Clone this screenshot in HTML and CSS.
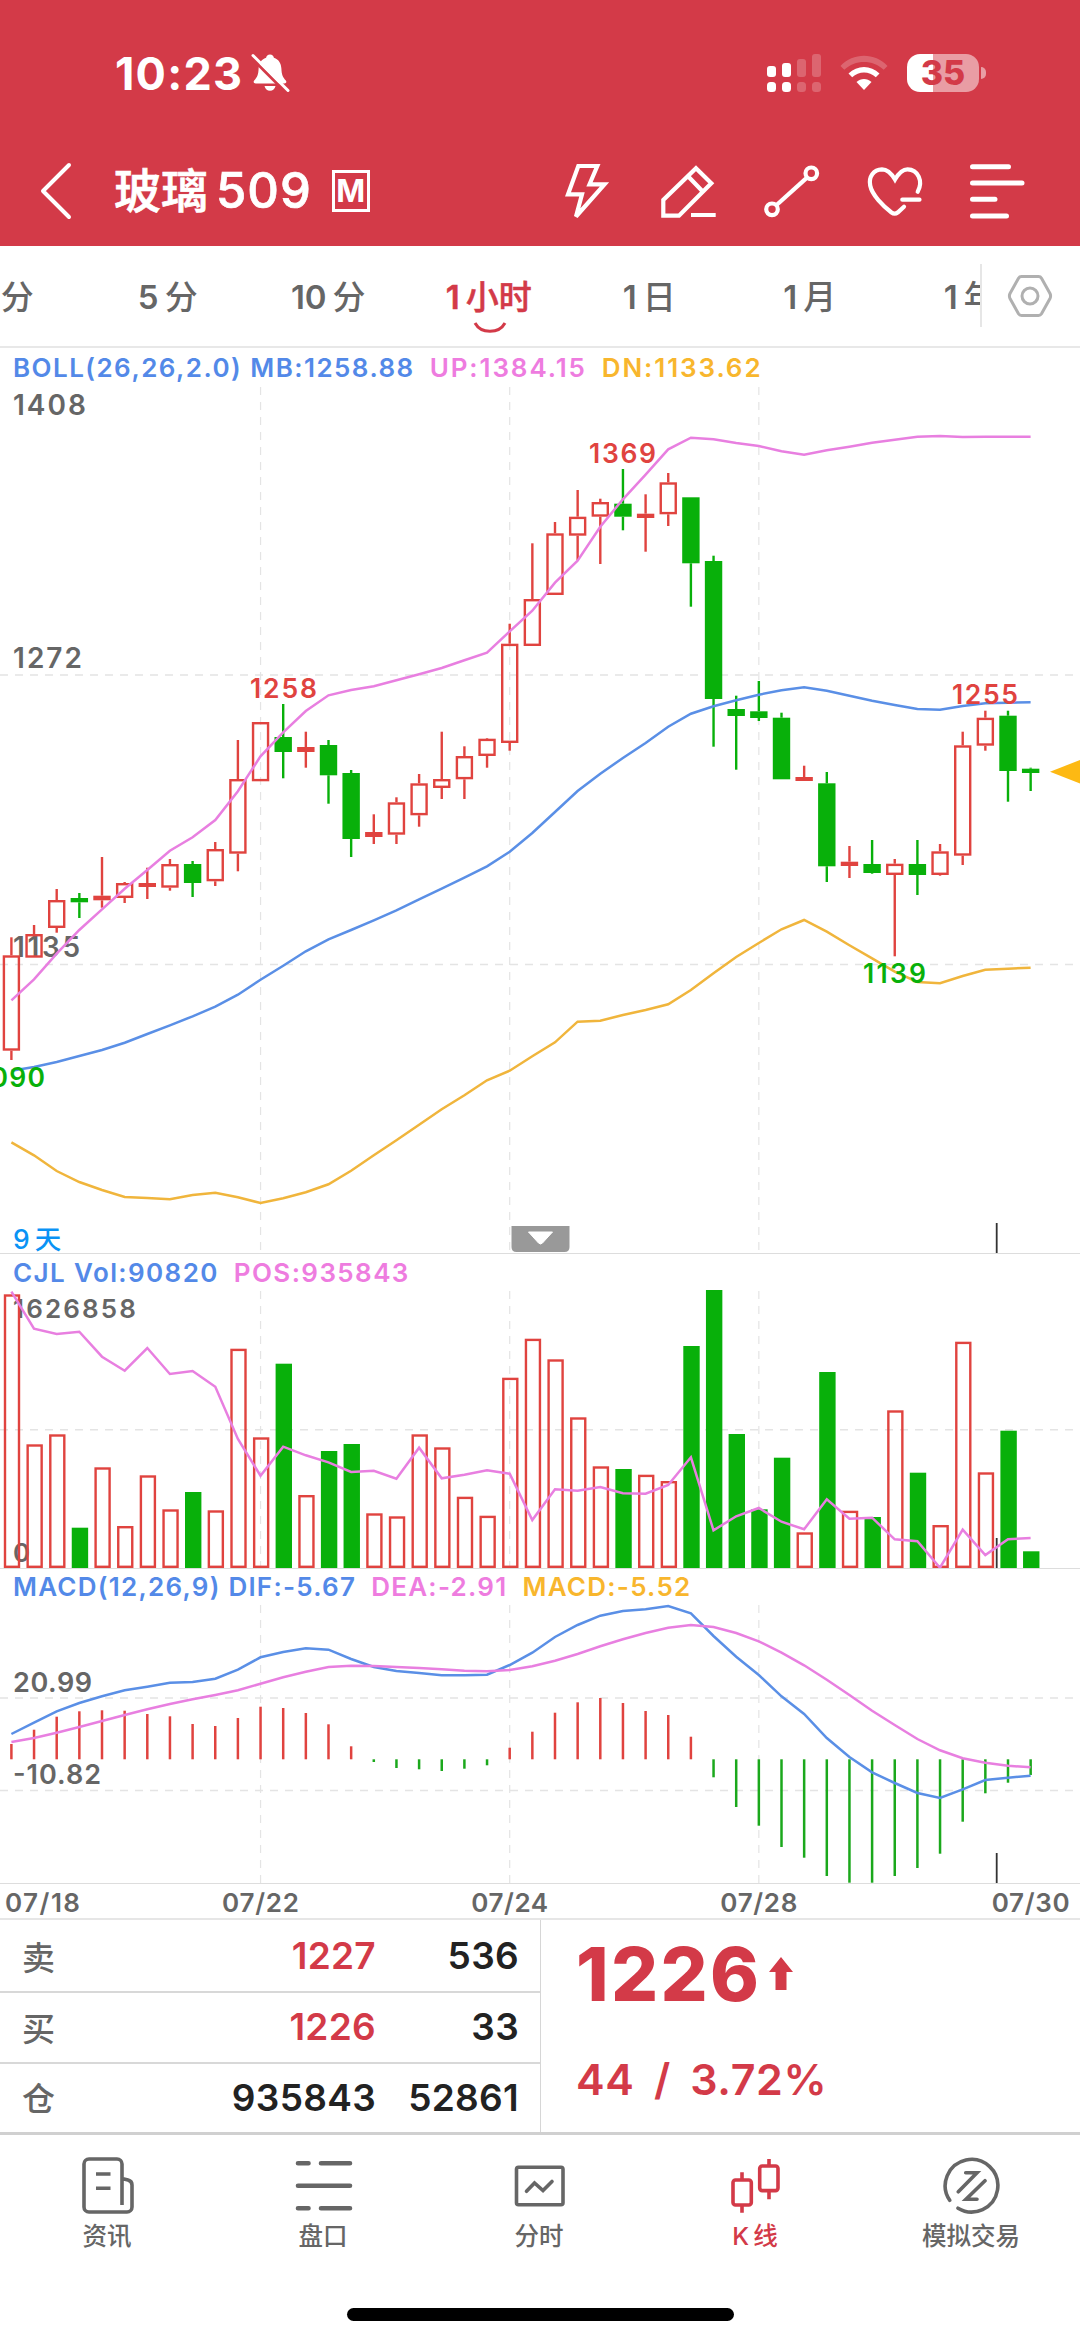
FILE: index.html
```html
<!DOCTYPE html>
<html lang="zh-CN">
<head>
    <meta charset="UTF-8">
    <meta name="viewport" content="width=device-width, initial-scale=1.0">
    <title>玻璃509</title>
    <link rel="stylesheet" href="styles.css">
</head>
<body>
    <header class="header">
        <div class="status-bar">
            <span class="time">10:23</span>
            <svg class="bell" width="40" height="40" viewBox="0 0 40 40">
                <path d="M20 1.500c2.300 0 3.600 1.300 3.900 3.200 5 1.600 7.300 5.900 7.500 11 .2 6 1.600 8.500 4.200 11.500 1.500 1.700.6 3.300-1.400 3.300H5.800c-2 0-2.900-1.600-1.400-3.300 2.600-3 4-5.500 4.200-11.500.2-5.100 2.500-9.400 7.500-11C16.400 2.800 17.700 1.500 20 1.500zM14.500 33h11c-.7 3-2.700 4.800-5.500 4.800S15.200 36 14.500 33z" fill="#fff"/>
                <path d="M3 6.500 35.500 39" stroke="#d33a48" stroke-width="3"/>
                <path d="M3 2.500 38 37.500" stroke="#fff" stroke-width="3" stroke-linecap="round"/>
            </svg>
            <svg class="signal" width="54" height="40" viewBox="0 0 54 40" fill="#fff">
                <rect x="0" y="13" width="9" height="11" rx="3"/>
                <rect x="15" y="10" width="9" height="14" rx="3"/>
                <rect x="0" y="29" width="9" height="10" rx="3.500"/>
                <rect x="15" y="29" width="9" height="10" rx="3.500"/>
                <g opacity=".22">
                    <rect x="30" y="6" width="9" height="18" rx="3"/>
                    <rect x="45" y="1" width="9" height="23" rx="3"/>
                    <rect x="30" y="29" width="9" height="10" rx="3.500"/>
                    <rect x="45" y="29" width="9" height="10" rx="3.500"/>
                </g>
            </svg>
            <svg class="wifi" width="48" height="40" viewBox="0 0 48 40" fill="#fff">
                <path d="M.5 13C13-.6 35-.6 47.500 13l-3.800 3.700C33 6.300 15 6.300 4.300 16.700z" opacity=".22"/>
                <path d="M8.500 20.500c8.500-8.700 22.500-8.700 31 0l-3.700 3.800c-6.600-6.500-17-6.500-23.600 0z"/>
                <path d="M16.500 29c4.300-4 10.700-4 15 0L24 37z"/>
            </svg>
            <div class="battery"><span>35</span></div>
            <i class="battery-tip"></i>
        </div>

        <div class="title-bar">
            <svg class="back" width="34" height="60" viewBox="0 0 34 60">
                <path d="M30 4 4 30 30 56" fill="none" stroke="#fff" stroke-width="4" stroke-linecap="round" stroke-linejoin="round"/>
            </svg>
            <h1 class="title">玻璃<span>509</span></h1>
            <span class="tag">M</span>
            <nav class="tools">
                <svg viewBox="0 0 60 60"><path d="M22.300 5h19l-7.800 18.300h15L20 55.500l6-22.200H12z"/></svg>
                <svg viewBox="0 0 60 60"><path d="M37 7.300l15.300 15L20 54.700H4.300V39zM30 16.300l13 13.400M32 54h24.700"/></svg>
                <svg viewBox="0 0 60 60"><circle cx="49.300" cy="12.300" r="5.800"/><circle cx="10" cy="48.300" r="5.800"/><path d="M45 16.600 14.300 44.200"/></svg>
                <svg viewBox="0 0 60 60" stroke-linecap="round"><path d="M52.700 30.700C58.500 20 53 8.500 42.500 8.300 37 8.300 33.500 12.500 30 18.500 26.500 12.500 22.500 8.300 17 8.300 8.500 8.500 3.500 16 5.200 24.500 7 34 18 45 26.500 51.500c2.200 1.600 4 1.600 6.200 0L39 45.700M37.300 38.700H54.500"/></svg>
                <svg viewBox="0 0 60 60" stroke-linecap="round" class="menu"><path d="M4.500 5.700H40.500M4.500 22H54M4.500 38.300H27M4.500 55H38.500"/></svg>
            </nav>
        </div>
    </header>

    <section class="periods">
        <div class="period-list">
            <span class="period"><i>1</i>分</span>
            <span class="period"><i>5</i>分</span>
            <span class="period"><i>10</i>分</span>
            <span class="period active"><i>1</i>小时
                <svg width="34" height="14" viewBox="0 0 34 14"><path d="M2 2c6 11 24 11 30 0" fill="none" stroke="#d33a48" stroke-width="3"/></svg>
            </span>
            <span class="period"><i>1</i>日</span>
            <span class="period"><i>1</i>月</span>
            <span class="period"><i>1</i>年</span>
        </div>
        <div class="settings">
            <svg width="46" height="44" viewBox="0 0 46 44" fill="none" stroke="#b0b0b0" stroke-width="3">
                <path d="M14.500 2.500h17q2 0 3 1.700l8.500 15.300q1.200 2.500 0 5l-8.500 15.300q-1 1.700-3 1.700h-17q-2 0-3-1.700L3 24.500q-1.200-2.500 0-5L11.500 4.200q1-1.700 3-1.700z"/>
                <circle cx="23" cy="22" r="8"/>
            </svg>
        </div>
    </section>

    <section class="panel">
        <div class="legend legend-boll">
            <span class="blue">BOLL(26,26,2.0) MB:1258.88</span>
            <span class="pink">UP:1384.15</span>
            <span class="orange">DN:1133.62</span>
        </div>
        <svg id="kline" class="chart" width="1080" height="868" viewBox="0 385 1080 868"></svg>
    </section>

    <section class="panel">
        <div class="legend legend-vol">
            <span class="blue">CJL Vol:90820</span>
            <span class="pink">POS:935843</span>
        </div>
        <svg id="volume" class="chart" width="1080" height="278" viewBox="0 1290 1080 278"></svg>
    </section>

    <section class="panel">
        <div class="legend legend-macd">
            <span class="blue">MACD(12,26,9) DIF:-5.67</span>
            <span class="pink">DEA:-2.91</span>
            <span class="orange">MACD:-5.52</span>
        </div>
        <svg id="macd" class="chart" width="1080" height="279" viewBox="0 1604 1080 279"></svg>
    </section>

    <svg id="dates" class="dates" width="1080" height="34" viewBox="0 1884 1080 34"></svg>

    <section class="quote">
        <div class="depth">
            <div class="depth-row"><span class="side">卖</span><b class="red">1227</b><b class="amount">536</b></div>
            <div class="depth-row"><span class="side">买</span><b class="red">1226</b><b class="amount">33</b></div>
            <div class="depth-row"><span class="side">仓</span><b>935843</b><b class="amount">52861</b></div>
        </div>
        <div class="last">
            <div class="price">1226
                <svg width="24" height="34" viewBox="0 0 24 34"><path d="M12 0l12 15h-6.500v18h-11V15H0z" fill="#d33a48"/></svg>
            </div>
            <div class="change">44 <i>/</i> 3.72%</div>
        </div>
    </section>

    <footer class="tabbar">
        <a class="tab">
            <svg viewBox="0 0 72 60"><path d="M51 49V8a5 5 0 0 0-5-5H18a5 5 0 0 0-5 5v43a5 5 0 0 0 5 5h38a5 5 0 0 0 5-5V29q0-4-4-5l-6-1.500M25 18h14.500M25 32.300h14.500"/></svg>
            资讯
        </a>
        <a class="tab">
            <svg viewBox="0 0 72 60" stroke-width="4.600"><path d="M11 7.300h10.500M34 7.300h29M11 29.700h52M11 52.300h10.500M34 52.300h29" stroke-linecap="round"/></svg>
            盘口
        </a>
        <a class="tab">
            <svg viewBox="0 0 72 60"><rect x="13.500" y="11.200" width="46.500" height="37.500" rx="2"/><path d="M23.500 35.300 31.500 27l8.500 7.500 9-9" stroke-linecap="round"/></svg>
            分时
        </a>
        <a class="tab active">
            <svg viewBox="0 0 72 60"><rect x="14" y="24" width="18.300" height="25" rx="2.500"/><path d="M23 16.300V24M23 49v7.700M50 3v7M50 34.600v8.700"/><rect x="40.700" y="10" width="18.300" height="24.600" rx="2.500"/></svg>
            <i>K</i>线
        </a>
        <a class="tab">
            <svg viewBox="0 0 72 60" stroke-linecap="round"><path d="M14.700 44.300A26.300 26.300 0 1 1 23 52.200M30.700 16.700H42L23.300 35.800M50 24.700 31 43.300h11"/></svg>
            模拟交易
        </a>
    </footer>
    <div class="home-bar"></div>

    <script src="chart.js"></script>
</body>
</html>
```

FILE: styles.css
```css
* {
    box-sizing: border-box;
}
body {
    margin: 0;
    width: 1080px;
    height: 2341px;
    overflow: hidden;
    background: #fff;
    color: #222;
    font-family: Inter, "Noto Sans CJK SC", sans-serif;
}
svg {
    display: block;
    flex: none;
}
.red {
    color: #d33a48;
}
.blue {
    color: #5389e8;
}
.pink {
    color: #ee7cdf;
}
.orange {
    color: #f8b62d;
}

/* header */
.header {
    height: 246px;
    background: #d33a48;
    color: #fff;
}
.status-bar {
    display: flex;
    align-items: center;
    height: 146px;
    padding: 0 94px 0 115px;
}
.time {
    width: 135px;
    font-size: 45px;
    font-weight: 700;
    letter-spacing: 1.2px;
    white-space: nowrap;
}
.signal {
    margin-left: auto;
}
.wifi {
    margin: 0 19px 0 19px;
}
.battery {
    width: 72px;
    height: 38px;
    border-radius: 13px;
    background: linear-gradient(90deg, #fff 26px, #e99da4 26px);
    color: #d33a48;
    font-size: 34px;
    font-weight: 800;
    line-height: 38px;
    text-align: center;
}
.battery-tip {
    width: 5px;
    height: 12px;
    margin-left: 2px;
    border-radius: 0 5px 5px 0;
    background: #e99da4;
}
.title-bar {
    display: flex;
    align-items: center;
    height: 89px;
    padding: 0 52px 0 39px;
}
.title {
    margin: 0 0 0 41px;
    font-size: 47px;
    font-weight: 500;
    line-height: 60px;
    white-space: nowrap;
    -webkit-text-stroke: 0.7px #fff;
}
.title span {
    margin-left: 8px;
    font-size: 49px;
    letter-spacing: 1px;
}
.tag {
    width: 38px;
    height: 42px;
    margin-left: 20px;
    border: 3px solid #fff;
    font-size: 31px;
    font-weight: 700;
    line-height: 36px;
    text-align: center;
}
.tools {
    display: flex;
    gap: 43px;
    margin-left: auto;
}
.tools svg {
    width: 60px;
    height: 60px;
    fill: none;
    stroke: #fff;
    stroke-width: 4.2;
}
.tools .menu {
    stroke-width: 5;
}

/* period tabs */
.periods {
    display: flex;
    height: 102px;
    border-bottom: 2px solid #e8e8e8;
    color: #666;
    font-size: 33px;
    font-weight: 500;
}
.period-list {
    display: flex;
    width: 980px;
    overflow: hidden;
}
.period {
    position: relative;
    flex: 0 0 160.500px;
    line-height: 102px;
    text-align: center;
}
.period i {
    margin-right: 6px;
    font-style: normal;
    font-weight: 600;
}
.period:first-child {
    margin-left: -73px;
}
.period.active {
    color: #d33a48;
    -webkit-text-stroke: 0.5px #d33a48;
}
.period svg {
    position: absolute;
    left: 64px;
    top: 75px;
}
.settings {
    display: flex;
    align-items: center;
    width: 100px;
    height: 63px;
    margin-top: 18px;
    padding-left: 25px;
    border-left: 2px solid #e6e6e6;
}

/* charts */
.panel {
    border-bottom: 1px solid #ddd;
}
.legend {
    display: flex;
    gap: 15px;
    padding-left: 13px;
    font-size: 26px;
    font-weight: 600;
    letter-spacing: 1.25px;
    white-space: nowrap;
}
.legend-boll {
    height: 37px;
    line-height: 39px;
    letter-spacing: 1.45px;
}
.legend-boll .pink,
.legend-boll .orange {
    letter-spacing: 1.9px;
}
.legend-vol {
    height: 36px;
    line-height: 37px;
    letter-spacing: 1.4px;
}
.legend-macd {
    height: 35px;
    line-height: 36px;
}
.chart text {
    font-weight: 600;
}
.chart .days {
    font-weight: 500;
}
.dates {
    font-size: 26px;
    font-weight: 600;
}

/* quote */
.quote {
    display: flex;
    height: 217px;
    border-top: 2px solid #e6e6e6;
    border-bottom: 3px solid #d0d0d0;
}
.depth {
    width: 541px;
    border-right: 1px solid #d6d6d6;
}
.depth-row {
    display: flex;
    align-items: center;
    height: 71px;
    padding: 0 21px 2px 22px;
    border-bottom: 2px solid #d8d8d8;
    font-size: 37px;
    letter-spacing: 0.3px;
}
.depth-row:first-child {
    height: 73px;
    padding-bottom: 0;
}
.depth-row:last-child {
    height: 68px;
    border-bottom: none;
}
.depth-row b {
    font-weight: 600;
    text-align: right;
}
.side {
    width: 80px;
    color: #666;
    font-size: 33px;
    font-weight: 500;
}
.depth-row .side + b {
    width: 274px;
}
.depth-row .amount {
    width: 143px;
}
.last {
    padding: 17px 0 0 35px;
    color: #d33a48;
}
.price {
    display: flex;
    align-items: center;
    gap: 8px;
    height: 74px;
    font-size: 74px;
    font-weight: 800;
    letter-spacing: 2.3px;
}
.change {
    margin-top: 38px;
    font-size: 43px;
    font-weight: 600;
    line-height: 60px;
    letter-spacing: 0.6px;
}
.change i {
    margin: 0 8px;
    font-style: normal;
}

/* bottom tabs */
.tabbar {
    display: flex;
    height: 173px;
    margin-left: -1px;
}
.tab {
    width: 216px;
    padding-top: 21px;
    color: #666;
    font-size: 24.5px;
    font-weight: 500;
    line-height: 40px;
    text-align: center;
}
.tab i {
    margin-right: 4px;
    font-style: normal;
}
.tab svg {
    width: 72px;
    height: 60px;
    margin: 0 auto;
    fill: none;
    stroke: currentColor;
}
.tab svg:not([stroke-width]) {
    stroke-width: 3.6;
}
.tab.active {
    color: #d33a48;
}
.home-bar {
    width: 387px;
    height: 13px;
    margin: 0 auto;
    border-radius: 7px;
    background: #000;
}
```

FILE: chart.js
```js
const RED = '#e0433f', GREEN = '#08b00a', BLUE = '#5a8fe6', PINK = '#e87fe0', ORANGE = '#f0b53c', GREY = '#666';
const X0 = 11.4, STEP = 22.65;
const gridX = [11, 22, 33];
const cx = i => X0 + i * STEP;

// colour, high, body top, body bottom, low
const candles = [
    ['r', 937.3, 955.3, 1050.7, 1060], ['r', 925, 934, 957.7, 957.7], ['r', 889, 900, 928, 932.7], ['g', 893, 898, 902.3, 918],
    ['r', 857, 895.7, 900.3, 907.7], ['r', 882, 883, 898, 903], ['r', 867.7, 883, 887, 899], ['r', 859, 864, 887.7, 890.7],
    ['g', 861, 864, 883, 897], ['r', 842, 849, 881.3, 886], ['r', 740, 779, 853.7, 871.3], ['r', 722, 722, 781.3, 781.3],
    ['g', 704, 737, 752, 778.3], ['r', 731.7, 747, 752, 767.7], ['g', 740, 745, 775.3, 803.7], ['g', 770, 773, 839, 857],
    ['r', 814.3, 832, 837, 844], ['r', 797.3, 802.3, 834.7, 844], ['r', 774, 783.3, 815.3, 826.7], ['r', 731.7, 779, 788, 799],
    ['r', 746.3, 756, 779.3, 799], ['r', 738, 738.7, 756, 767.7], ['r', 623.7, 643.7, 743, 750.7], ['r', 543.3, 599, 646, 646],
    ['r', 522, 533.3, 595, 595], ['r', 490, 516.7, 535.7, 560], ['r', 498.7, 502, 516.7, 564], ['g', 469, 503.7, 516.7, 530.3],
    ['r', 494.3, 513.7, 518, 551.7], ['r', 473, 482.3, 514.3, 526], ['g', 497.3, 497.3, 563.3, 606.7], ['g', 555.7, 561, 699, 746.7],
    ['g', 695.7, 709, 716, 769.7], ['g', 681, 711.3, 718, 721], ['g', 712.7, 717.7, 779.3, 779.3], ['r', 765.7, 777, 781, 781],
    ['g', 772, 783.3, 866.3, 882], ['r', 846, 861.7, 866, 878], ['g', 840, 864, 873, 873.7], ['r', 859, 863.7, 875, 956.3],
    ['g', 840, 864, 875, 895], ['r', 844, 851.3, 875, 875.7], ['r', 731.7, 745.3, 855.7, 865], ['r', 710.7, 717.7, 745.7, 750.7],
    ['g', 710.7, 715.7, 771, 801.7], ['g', 767.7, 768.7, 773, 791]
];
const up = [1000.3, 979.3, 953.7, 930, 909.3, 888.7, 870, 850.7, 837.3, 820, 791.3, 756.3, 732.3, 711, 695.3, 690, 686.3, 680.3, 674.3, 668, 660.3, 652.7, 631.3, 610.7, 582.7, 560.7, 526.7, 499.3, 474.7, 449.3, 437.7, 439.3, 443, 446, 451.3, 454.7, 450.3, 446.7, 442.7, 439.7, 436.7, 435.9, 436.9, 436.7, 436.7, 436.7];
const mb = [1070.7, 1067, 1062, 1056, 1050, 1042.7, 1034, 1025.3, 1016.3, 1006.7, 994.7, 979.7, 965.7, 951.3, 939.3, 930, 920.3, 910.3, 899.3, 888.7, 877.7, 866.3, 851.7, 833, 812, 791, 773.7, 758, 743, 726.7, 713.7, 706.3, 700.3, 694.7, 690.3, 687.3, 690.7, 695.7, 700.7, 705, 709, 709.7, 706, 703.3, 702.7, 702.3];
const dn = [1142.3, 1155.3, 1171, 1182, 1190, 1197, 1198, 1199.3, 1195, 1192.7, 1197.3, 1203, 1198.3, 1192.3, 1184.3, 1170.7, 1155.3, 1140.3, 1124.7, 1109.3, 1095.3, 1080.3, 1070.7, 1056.3, 1042.3, 1021.7, 1020.7, 1015, 1010, 1004.3, 990, 973.3, 957, 943, 929.3, 920, 931.7, 945.3, 958.3, 971.7, 982, 983.3, 976, 969.7, 968.7, 967.7];

const vol = [1294.3, 1444.3, 1434.3, 1527.7, 1467.3, 1526, 1475.3, 1509.3, 1492, 1510.3, 1348.7, 1437.3, 1363.7, 1495, 1451, 1444, 1513.3, 1516.3, 1434.3, 1447.3, 1496.7, 1515.7, 1377.7, 1338.7, 1359.3, 1417.3, 1466.3, 1469, 1474.7, 1481, 1346, 1289.7, 1434, 1509.3, 1457.7, 1532.3, 1372, 1510.7, 1517, 1410.3, 1472.7, 1525, 1341.7, 1472.3, 1430.7, 1551.3];
const pos = [1291.7, 1328.7, 1334, 1331.7, 1356.7, 1370.7, 1348, 1374, 1371, 1386.7, 1439, 1475.7, 1446.7, 1455.3, 1462.3, 1472, 1470.7, 1478.7, 1447.7, 1478.3, 1474.7, 1470.3, 1473.7, 1520, 1489.3, 1490.7, 1487, 1493.3, 1493.7, 1485, 1457.3, 1530.3, 1516.3, 1508, 1521.7, 1529.3, 1499.3, 1518.7, 1517.7, 1539.3, 1541.3, 1567.7, 1529.7, 1555, 1539.3, 1538];

const ZERO = 1759.3;
const hist = [1744, 1729.7, 1716.7, 1711.3, 1710.3, 1710.7, 1714, 1716.3, 1724, 1726, 1718, 1706.7, 1708, 1713, 1724.3, 1746.3, 1762, 1768, 1769.3, 1771, 1768.7, 1765.3, 1747.7, 1731.7, 1712.7, 1702.3, 1698, 1703, 1711, 1715, 1736.7, 1777.3, 1807, 1825.7, 1847, 1857.7, 1876, 1882.7, 1882.7, 1876, 1868, 1853.7, 1821.7, 1793.3, 1782.7, 1775];
const dif = [1734, 1722.7, 1711.3, 1703, 1696.3, 1690.3, 1686.7, 1682.7, 1682, 1678.7, 1669.7, 1657.3, 1652, 1648.3, 1649.7, 1659, 1667, 1671, 1673, 1675.3, 1675.3, 1674.7, 1665, 1652.7, 1637, 1625, 1615.7, 1611, 1609.3, 1606, 1613.3, 1636, 1656.7, 1675, 1696.3, 1714, 1738, 1757, 1772.3, 1783, 1793, 1798, 1789.3, 1780, 1777.7, 1775.7];
const dea = [1742, 1738, 1732.7, 1727, 1721, 1715, 1709.3, 1704, 1699.3, 1695, 1690.3, 1683.7, 1677.3, 1671.7, 1667, 1665.7, 1666, 1667, 1668, 1669.3, 1670.7, 1671.3, 1670, 1666.3, 1660.7, 1654, 1646.3, 1639.3, 1633, 1627.7, 1625, 1627, 1633, 1641.3, 1652.7, 1665.3, 1679.7, 1695, 1710.7, 1725, 1739, 1750.3, 1758.3, 1762.7, 1765.7, 1767.3];

const color = i => candles[i][0] === 'r' ? RED : GREEN;

function seg(x1, y1, x2, y2, stroke, width = 2, extra = '') {
    return `<line x1="${x1}" y1="${y1}" x2="${x2}" y2="${y2}" stroke="${stroke}" stroke-width="${width}" ${extra}/>`;
}
function poly(values, stroke) {
    const points = values.map((y, i) => `${cx(i).toFixed(1)},${y}`).join(' ');
    return `<polyline points="${points}" fill="none" stroke="${stroke}" stroke-width="2.5"/>`;
}
function box(x, top, bottom, w, i) {
    // rising bars are hollow, falling ones are solid
    if (color(i) === RED && bottom - top > 6) {
        return `<rect x="${x - w / 2 + 1.2}" y="${top + 1.2}" width="${w - 2.4}" height="${bottom - top - 2.4}" fill="none" stroke="${RED}" stroke-width="2.4"/>`;
    }
    return `<rect x="${x - w / 2}" y="${top}" width="${w}" height="${bottom - top}" fill="${color(i)}"/>`;
}
function label(x, y, value, fill, size, length, anchor = 'start') {
    return `<text x="${x}" y="${y}" fill="${fill}" font-size="${size}" textLength="${length}" text-anchor="${anchor}">${value}</text>`;
}
function grid(top, bottom, rows) {
    const dash = 'stroke-dasharray="8 7"';
    return gridX.map(i => seg(cx(i), top, cx(i), bottom, '#e4e4e4', 1.2, dash)).join('') +
        rows.map(y => seg(0, y, 1080, y, '#e4e4e4', 1.5, dash)).join('');
}

document.getElementById('kline').innerHTML =
    grid(387, 1253, [675, 964.5]) +
    label(13, 415, '1408', GREY, 28, 73) +
    label(13, 668, '1272', GREY, 28, 69) +
    label(13, 956.5, '1135', GREY, 28, 67) +
    candles.map(([, high, top, bottom, low], i) =>
        seg(cx(i), high, cx(i), top, color(i), 2.4) + seg(cx(i), bottom, cx(i), low, color(i), 2.4) + box(cx(i), top, bottom, 17.4, i)
    ).join('') +
    poly(mb, BLUE) + poly(up, PINK) + poly(dn, ORANGE) +
    label(283.5, 698, '1258', RED, 26.5, 67, 'middle') +
    label(622.5, 463, '1369', RED, 26.5, 67, 'middle') +
    label(985, 704, '1255', RED, 26.5, 66, 'middle') +
    label(894.5, 983, '1139', GREEN, 26.5, 63, 'middle') +
    label(11.4, 1086.5, '1090', GREEN, 26.5, 67, 'middle') +
    '<text class="days" x="13" y="1249" fill="#0a93f5" font-size="26.500">9<tspan dx="5">天</tspan></text>' +
    '<path d="M1050 771.700 1080 760v23.500z" fill="#fdb913"/>' +
    '<path d="M511.500 1226h58v21q0 5-5 5h-48q-5 0-5-5z" fill="#999"/>' +
    '<path d="M528.500 1232h24l-10 11q-2 2-4 0z" fill="#fff" stroke="#fff" stroke-linejoin="round"/>' +
    seg(996.7, 1223, 996.7, 1253, '#333', 1.8);

document.getElementById('volume').innerHTML =
    grid(1291, 1568, [1429.7]) +
    label(13, 1317.5, '1626858', GREY, 26, 123) +
    label(13, 1562, '0', GREY, 26, 16) +
    seg(996.7, 1538, 996.7, 1568, '#333', 1.8) +
    vol.map((y, i) => box(cx(i) + 0.6, y, 1568, 16.4, i)).join('') +
    poly(pos, PINK);

document.getElementById('macd').innerHTML =
    grid(1605, 1883, [1698, 1790.4]) +
    label(13, 1692, '20.99', GREY, 27, 79) +
    label(13, 1784, '-10.82', GREY, 27, 88) +
    hist.map((y, i) => seg(cx(i), ZERO, cx(i), y, y < ZERO ? RED : '#1ba81c', 2.5)).join('') +
    poly(dif, BLUE) + poly(dea, PINK) +
    seg(996.7, 1853, 996.7, 1883, '#333', 1.8);

document.getElementById('dates').innerHTML =
    label(5, 1912, '07/18', GREY, 26, 75) +
    label(cx(11), 1912, '07/22', GREY, 26, 77, 'middle') +
    label(cx(22), 1912, '07/24', GREY, 26, 77, 'middle') +
    label(cx(33), 1912, '07/28', GREY, 26, 77, 'middle') +
    label(cx(45), 1912, '07/30', GREY, 26, 78, 'middle');
```
